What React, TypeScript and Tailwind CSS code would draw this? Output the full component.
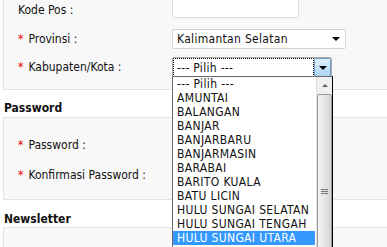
import React from "react";

const Star = () => <span className="text-[#e60000] mr-[5px]">*</span>;

const Tri = () => (
  <span className="block w-0 h-0 border-l-[4px] border-r-[4px] border-t-[4px] border-l-transparent border-r-transparent border-t-black" />
);

const items = [
  "--- Pilih ---",
  "AMUNTAI",
  "BALANGAN",
  "BANJAR",
  "BANJARBARU",
  "BANJARMASIN",
  "BARABAI",
  "BARITO KUALA",
  "BATU LICIN",
  "HULU SUNGAI SELATAN",
  "HULU SUNGAI TENGAH",
  "HULU SUNGAI UTARA",
];

export default function App() {
  return (
    <div className="relative w-[387px] h-[247px] overflow-hidden bg-white text-[12px] leading-[14px] text-[#111] font-['DejaVu_Sans_Condensed','DejaVu_Sans',sans-serif]">
      {/* Box 1 */}
      <div className="ml-[3px] -mr-[20px] -mt-[9px] border border-[#e4e4e4] bg-[#f8f8f8] pt-[6px] pb-[12px]">
        <div className="flex items-start h-[20px]">
          <div className="w-[168px] pl-[14px] pt-[5px]">Kode Pos :</div>
          <div className="w-[127px] h-[20px] bg-white border border-[#dcdcdc] rounded-[3px]" />
        </div>
        <div className="flex items-start h-[20px] mt-[11px]">
          <div className="w-[168px] pl-[14px] pt-[3px]">
            <Star />Provinsi :
          </div>
          <div className="w-[174px] h-[20px] bg-white border border-[#d4d4d4] rounded-[2px] flex items-center pl-[4px] pr-[5px] justify-between">
            <span className="tracking-[0.3px]">Kalimantan Selatan</span>
            <Tri />
          </div>
        </div>
        <div className="flex items-start h-[20px] mt-[8px]">
          <div className="w-[168px] pl-[14px] pt-[3px]">
            <Star />Kabupaten/Kota :
          </div>
          <div className="relative w-[160px] h-[21px]">
            <div className="w-full h-full bg-white border border-[#a9a9a9] rounded-[2px] flex items-stretch">
              <div className="flex-1 border border-dotted border-black flex items-center pl-[3px] tracking-[0.3px]">
                --- Pilih ---
              </div>
              <div className="w-[17px] border border-[#6f9ec6] rounded-[2px] bg-gradient-to-b from-[#e3f2fc] to-[#a9d4f2] flex items-center justify-center">
                <Tri />
              </div>
            </div>
            {/* Dropdown list */}
            <div className="absolute left-0 top-[19px] w-[161px] h-[220px] bg-white border border-black border-l-[#6a6a6a] border-t-[#6a6a6a] flex z-10 overflow-hidden">
              <div className="flex-1 flex flex-col pr-[1px]">
                {items.map((it, i) => (
                  <div
                    key={it}
                    className={
                      "h-[14px] leading-[14px] pl-[4px] whitespace-nowrap tracking-[0.35px] " +
                      (i === 11 ? "bg-[#3399ff] text-white" : "")
                    }
                  >
                    {it}
                  </div>
                ))}
              </div>
              <div className="w-[16px] bg-[#f0f0f0] border-l border-[#e0e0e0] flex flex-col">
                <div className="h-[17px] flex items-center justify-center">
                  <span className="block w-0 h-0 border-l-[3px] border-r-[3px] border-b-[3px] border-l-transparent border-r-transparent border-b-[#606060]" />
                </div>
                <div className="h-[194px] border border-[#9a9a9a] rounded-[2px] bg-gradient-to-r from-[#f4f4f4] via-[#e6e6e6] to-[#d4d4d4] flex items-center justify-center">
                  <div className="flex flex-col gap-[1px]">
                    <span className="block w-[7px] h-[1px] bg-[#777]" />
                    <span className="block w-[7px] h-[1px] bg-[#777]" />
                    <span className="block w-[7px] h-[1px] bg-[#777]" />
                  </div>
                </div>
              </div>
            </div>
          </div>
        </div>
      </div>

      {/* Password heading */}
      <div className="pl-[4px] pt-[11px] pb-[2px] font-bold">Password</div>
      <div className="ml-[3px] -mr-[20px] border border-[#e4e4e4] bg-[#f8f8f8] pt-[16px] pb-[15px]">
        <div className="flex items-start h-[20px]">
          <div className="w-[168px] pl-[14px] pt-[4px]">
            <Star />Password :
          </div>
          <div className="w-[127px] h-[20px] bg-white border border-[#dcdcdc] rounded-[3px]" />
        </div>
        <div className="flex items-start h-[20px] mt-[10px]">
          <div className="w-[168px] pl-[14px] pt-[4px]">
            <Star />Konfirmasi Password :
          </div>
          <div className="w-[127px] h-[20px] bg-white border border-[#dcdcdc] rounded-[3px]" />
        </div>
      </div>

      {/* Newsletter heading */}
      <div className="pl-[4px] pt-[12px] pb-[1px] font-bold">Newsletter</div>
      <div className="ml-[3px] -mr-[20px] border border-[#e4e4e4] bg-[#f8f8f8] h-[60px]" />
    </div>
  );
}
